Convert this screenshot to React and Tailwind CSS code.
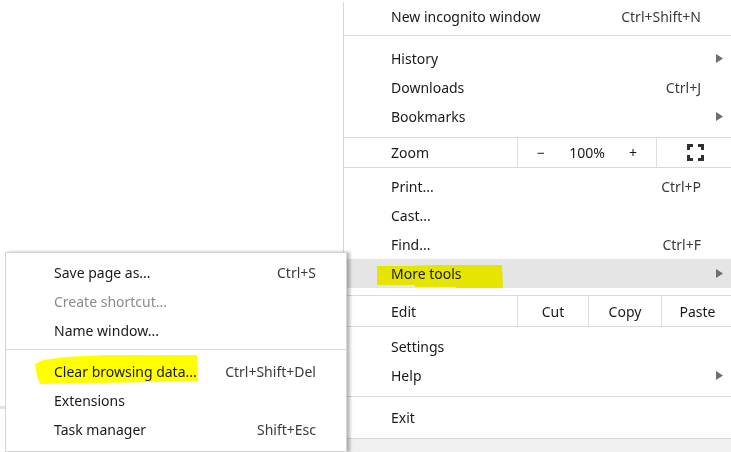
import React from 'react'

const Arrow = () => (
  <svg width="7" height="9" viewBox="0 0 7 9" className="shrink-0">
    <polygon points="0,0 7,4.5 0,9" fill="#6e6e6e" />
  </svg>
)

const FullscreenIcon = () => (
  <svg width="17" height="17" viewBox="0 0 17 17">
    <g fill="#303030">
      <polygon points="0,0 6,0 6,3 3,3 3,6 0,6" />
      <polygon points="11,0 17,0 17,6 14,6 14,3 11,3" />
      <polygon points="17,11 17,17 11,17 11,14 14,14 14,11" />
      <polygon points="0,11 3,11 3,14 6,14 6,17 0,17" />
    </g>
  </svg>
)

function MenuItem({ label, shortcut, arrow, className = '', children }) {
  return (
    <div
      className={`relative h-[29px] flex items-center pl-[47px] ${arrow ? 'pr-[10px]' : 'pr-[32px]'} ${className}`}
    >
      {children}
      <span className="relative flex-1 text-[#1a1a1a]">{label}</span>
      {shortcut && <span className="relative text-[#3a3a3a]">{shortcut}</span>}
      {arrow && <Arrow />}
    </div>
  )
}

function SubItem({ label, shortcut, disabled, children }) {
  return (
    <div className="relative h-[29px] flex items-center pl-[48px] pr-[30px]">
      {children}
      <span className={`relative flex-1 ${disabled ? 'text-[#8c8c8c]' : 'text-[#1a1a1a]'}`}>
        {label}
      </span>
      {shortcut && <span className="relative text-[#3a3a3a]">{shortcut}</span>}
    </div>
  )
}

export default function App() {
  return (
    <div
      className="relative w-[731px] h-[452px] overflow-hidden bg-white text-[14px]"
      style={{ fontFamily: '"Noto Sans", "Open Sans", sans-serif' }}
    >
      {/* main chrome menu */}
      <div className="ml-[343px] w-[390px] border-l border-[#d8d8d8]">
        <MenuItem label="New incognito window" shortcut="Ctrl+Shift+N" className="mt-[2px]" />
        <div className="h-px bg-[#dadada] mt-[4px] mb-[8px]" />
        <MenuItem label="History" arrow />
        <MenuItem label="Downloads" shortcut="Ctrl+J" />
        <MenuItem label="Bookmarks" arrow />

        <div className="mt-[6px] h-[31px] flex border-y border-[#dadada]">
          <div className="w-[173px] pl-[47px] flex items-center text-[#1a1a1a]">Zoom</div>
          <div className="w-[139px] flex items-center border-l border-[#dedede] text-[#1a1a1a]">
            <span className="w-[46px] text-center">−</span>
            <span className="flex-1 text-center">100%</span>
            <span className="w-[46px] text-center">+</span>
          </div>
          <div className="flex-1 flex items-center justify-center border-l border-[#dedede]">
            <FullscreenIcon />
          </div>
        </div>

        <MenuItem label="Print..." shortcut="Ctrl+P" className="mt-[4px]" />
        <MenuItem label="Cast..." />
        <MenuItem label="Find..." shortcut="Ctrl+F" />
        <MenuItem label="More tools" arrow className="bg-[#e5e5e5]">
          <svg
            width="127"
            height="24"
            viewBox="0 0 127 24"
            className="absolute left-[33px] top-[6px] mix-blend-multiply"
          >
            <polygon
              points="0,1 30,1 60,0 125,0 126,23 80,23 78,22 38,22 38,20 0,20"
              fill="#ffff00"
            />
          </svg>
        </MenuItem>

        <div className="mt-[7px] h-[32px] flex border-y border-[#dadada] text-[#1a1a1a]">
          <div className="w-[173px] pl-[47px] flex items-center">Edit</div>
          <div className="w-[71px] flex items-center justify-center border-l border-[#dedede]">Cut</div>
          <div className="w-[73px] flex items-center justify-center border-l border-[#dedede]">Copy</div>
          <div className="flex-1 flex items-center justify-center border-l border-[#dedede]">Paste</div>
        </div>

        <MenuItem label="Settings" className="mt-[5px]" />
        <MenuItem label="Help" arrow />
        <div className="h-px bg-[#dadada] mt-[6px] mb-[6px]" />
        <MenuItem label="Exit" />
        <div className="h-px bg-[#dadada] mt-[6px]" />
        <div className="h-[20px] bg-[#f0f0f0]" />
      </div>

      {/* faint page edge on the far left */}
      <div className="absolute left-0 top-[406px] w-[5px] h-[3px] bg-[#e2e2e2]" />

      {/* more tools submenu */}
      <div className="absolute left-[5px] top-[252px] w-[342px] h-[200px] bg-white border border-[#d4d4d4] pt-[5px] shadow-[3px_0_3px_rgba(0,0,0,0.28)]">
        <SubItem label="Save page as..." shortcut="Ctrl+S" />
        <SubItem label="Create shortcut..." disabled />
        <SubItem label="Name window..." />
        <div className="h-px bg-[#dadada] mt-[4px] mb-[7px]" />
        <SubItem label="Clear browsing data..." shortcut="Ctrl+Shift+Del">
          <svg
            width="164"
            height="31"
            viewBox="0 0 164 31"
            className="absolute left-[29px] top-[-3px]"
          >
            <polygon
              points="0,10 8,6 30,3 70,1 162,1 163,27 120,28 60,29 5,30 2,22"
              fill="#ffff00"
            />
          </svg>
        </SubItem>
        <SubItem label="Extensions" />
        <SubItem label="Task manager" shortcut="Shift+Esc" />
      </div>
    </div>
  )
}
